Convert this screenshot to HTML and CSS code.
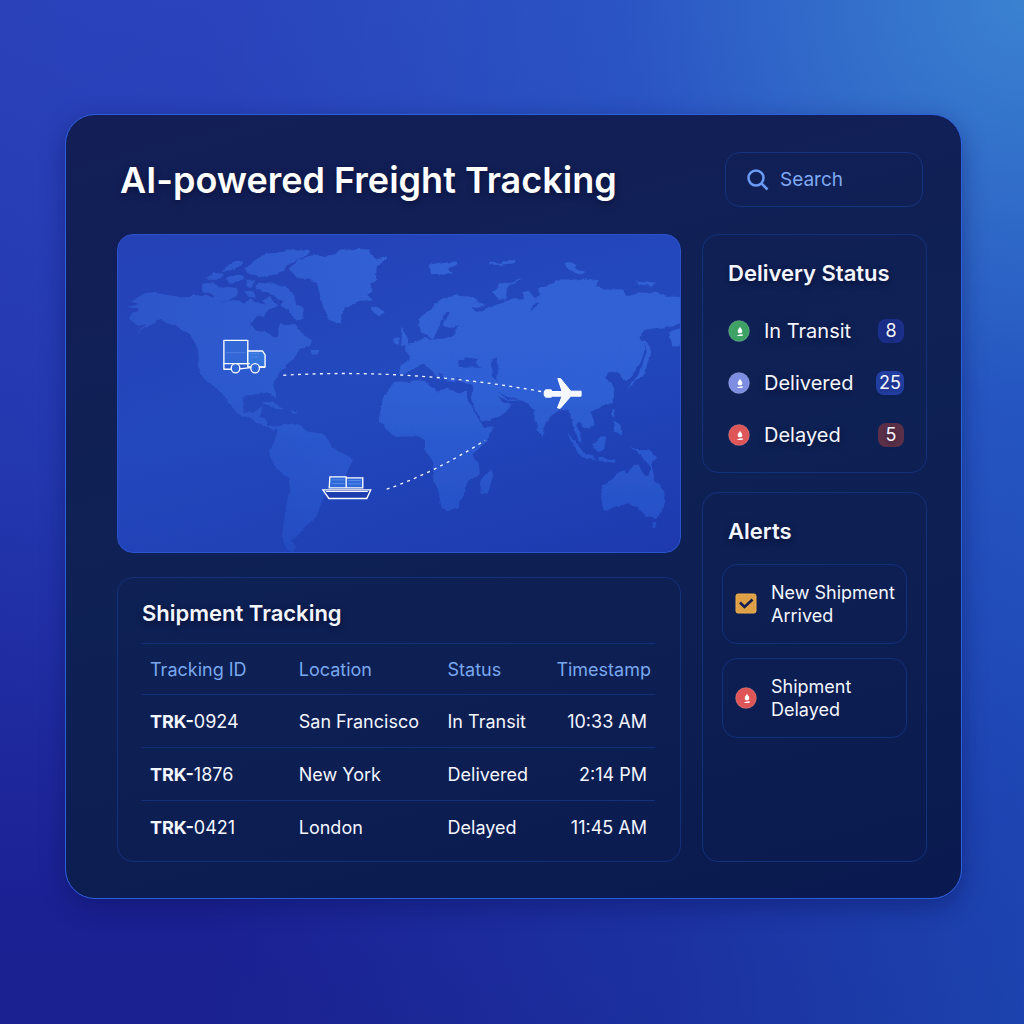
FILE: index.html
```html
<!DOCTYPE html>
<html lang="en">
<head>
<meta charset="utf-8">
<meta name="viewport" content="width=device-width, initial-scale=1">
<title>AI-powered Freight Tracking</title>
<link rel="stylesheet" href="styles.css">
</head>
<body>
<svg class="sprite" width="0" height="0" aria-hidden="true">
  <symbol id="dot-mark" viewBox="0 0 22 22">
    <circle cx="11" cy="11" r="10.5" fill="currentColor" stroke="#fff" stroke-opacity=".16"/>
    <path d="M12 6.800L13 8.500C14.600 9.500 14.800 12.400 13.200 13.300H10.800C9.200 12.400 9.400 9.500 11 8.500Z" fill="#fff"/>
    <path d="M9.300 15.200Q12 14.200 14.800 14.200L14.500 16H9.500Z" fill="#fff"/>
  </symbol>
</svg>
<main class="panel">
  <header class="header">
    <h1 class="title">AI-powered Freight Tracking</h1>
    <label class="search">
      <svg class="search-icon" viewBox="0 0 22 22" aria-hidden="true"><circle cx="9" cy="9" r="7.500"/><path d="M14.500 14.500L20.500 20.500"/></svg>
      <input class="search-input" type="search" placeholder="Search" aria-label="Search">
    </label>
  </header>
  <div class="content">
    <div class="column">
      <section class="map" aria-label="Shipment map">
        <svg class="map-svg" viewBox="21 18 1692 954" preserveAspectRatio="xMidYMid slice" aria-hidden="true">
          <defs>
            <linearGradient id="land" x1="0" y1="0" x2="0" y2="972" gradientUnits="userSpaceOnUse">
              <stop offset="0" stop-color="#3262d6"/><stop offset=".5" stop-color="#2f5fd4"/><stop offset="1" stop-color="#244dc4"/>
            </linearGradient>
            <linearGradient id="fade" x1="0" y1="0" x2="1" y2="0">
              <stop offset="0" stop-color="#2444b8" stop-opacity=".4"/><stop offset=".5" stop-color="#2444b8" stop-opacity="0"/>
            </linearGradient>
            <filter id="coast" x="0" y="0" width="1" height="1">
              <feTurbulence type="fractalNoise" baseFrequency=".035" numOctaves="3" seed="4"/>
              <feDisplacementMap in="SourceGraphic" scale="14" xChannelSelector="R" yChannelSelector="G"/>
            </filter>
          </defs>
          <g filter="url(#coast)">
            <rect x="0" y="0" width="1760" height="1000" fill="none"/>
            <g fill="url(#land)">
              <path d="M110 188L160 197 200 203 222 209 245 200 285 198 310 210 340 220 380 212 400 225 420 212 440 222 470 228 480 240 460 262 432 268 418 285 440 303 470 312 490 326 505 325 500 300 510 285 530 290 550 285 565 300 580 320 605 335 600 352 570 362 555 380 545 395 525 410 510 425 500 450 488 470 500 490 500 506 480 497 450 492 415 497 398 510 395 535 405 552 430 552 440 540 457 535 452 552 445 562 465 572 475 590 500 598 490 606 470 592 440 582 420 570 385 557 360 532 335 495 315 480 290 460 272 440 265 410 262 360 250 340 235 315 215 300 185 288 165 283 140 275 125 285 100 300 72 320 90 303 108 290 80 290 55 270 60 258 80 250 85 238 45 238 70 230 85 222 65 215 90 200Z"/>
              <path d="M485 595L500 610 497 635 475 671 485 700 500 725 540 750 535 800 525 850 515 920 530 960 545 975 555 960 545 940 565 920 580 900 600 881 625 851 640 806 700 756 725 701 720 686 680 666 655 646 640 616 600 611 570 591 550 588 535 583 510 592Z"/>
              <path d="M535 120L560 95 600 80 640 82 680 75 690 62 740 60 775 62 780 75 800 92 835 83 825 95 800 110 798 150 780 165 790 185 770 195 785 212 760 215 735 225 700 240 692 283 680 283 655 270 640 235 630 200 620 165 600 150 565 148Z"/>
              <path d="M405 118L430 92 480 70 540 64 600 66 590 80 560 92 530 110 520 125 490 135 470 148 440 140 420 135Z"/>
              <path d="M440 165L490 160 530 180 555 200 560 225 580 245 575 270 555 275 535 245 510 230 520 215 490 200 460 190 435 178Z"/>
              <path d="M275 165L310 160 330 178 365 172 385 185 375 205 345 220 315 212 300 195 275 185ZM285 150L310 132 335 130 340 140 315 150ZM330 125L370 100 395 98 388 112 355 125ZM345 150L380 138 400 140 395 155 360 162ZM405 150L430 155 425 175 405 170ZM400 185L430 188 440 205 415 208ZM455 215L480 205 500 235 480 240Z"/>
              <path d="M782 238L805 236 828 250 810 262 788 252ZM958 110L990 104 1040 98 1045 108 1010 118 1030 130 1000 138 965 132ZM875 290L885 315 895 335 892 350 870 352 872 330ZM855 325L867 328 862 348 850 345ZM600 363L625 365 622 378 605 378Z"/>
              <path d="M925 270L940 258 965 245 975 225 1000 208 1040 200 1090 205 1110 220 1125 232 1085 236 1100 250 1120 245 1140 235 1170 222 1200 214 1240 208 1238 190 1260 185 1275 205 1290 200 1285 180 1310 172 1345 155 1400 155 1430 148 1465 155 1460 175 1500 182 1540 182 1550 202 1575 198 1600 192 1640 192 1680 203 1740 205 1740 275 1680 295 1640 298 1605 305 1590 325 1605 340 1605 370 1595 400 1580 425 1560 445 1545 455 1535 440 1520 430 1500 435 1488 450 1510 460 1515 480 1510 521 1480 535 1455 545 1440 555 1453 575 1455 590 1440 600 1420 597 1410 580 1400 590 1415 620 1420 645 1405 630 1395 605 1390 570 1375 545 1350 540 1335 555 1310 580 1302 600 1300 625 1285 605 1275 570 1275 545 1255 525 1230 515 1200 518 1165 502 1180 520 1205 530 1195 545 1160 570 1115 580 1105 560 1085 515 1090 490 1085 470 1060 462 1040 448 1035 462 1010 455 985 430 995 458 965 425 940 405 915 415 900 430 880 437 870 432 875 410 900 390 890 375 885 360 890 345 910 343 925 335 945 325 960 330 1000 330 1030 320 1040 300 1050 290 1030 300 1000 290 1000 275 1022 255 1010 250 990 275 985 300 970 330 955 320 930 310 925 290Z"/>
              <path d="M855 460L840 480 825 500 815 531 805 571 830 606 850 626 915 624 945 636 945 661 970 701 968 746 985 786 995 841 1010 852 1045 836 1070 786 1075 756 1110 736 1105 700 1090 680 1130 636 1155 594 1120 596 1100 560 1075 515 1070 490 1050 492 1010 480 985 486 960 475 950 458 915 455 880 460Z"/>
              <path d="M1145 721L1152 736 1135 796 1115 798 1110 761Z"/>
              <path d="M1475 776L1510 752 1520 740 1545 725 1555 735 1570 715 1590 712 1600 735 1617 748 1625 706 1640 760 1665 790 1668 820 1660 850 1640 870 1610 862 1590 845 1560 825 1520 835 1490 848 1478 845 1480 820ZM1630 882L1645 882 1640 902 1630 898Z"/>
              <path d="M1562 656L1590 666 1620 664 1648 692 1625 700 1628 722 1612 706 1595 681ZM1372 612L1400 640 1430 678 1465 696 1430 692 1400 662ZM1450 651L1475 621 1490 626 1485 661 1465 671ZM1510 576L1535 591 1535 621 1515 606ZM1470 684L1520 696 1515 704 1470 694ZM1510 540L1518 545 1516 568 1508 560Z"/>
              <path d="M1602 330L1615 345 1625 378 1612 405 1604 440 1570 468 1552 486 1560 468 1590 440 1602 400 1610 375ZM1680 310L1740 296 1740 340 1690 355ZM1150 190L1170 165 1245 150 1200 165 1190 210 1165 210ZM1365 100L1385 100 1400 116 1430 130 1410 133 1370 115ZM1580 158L1640 165 1630 172 1588 166ZM1142 98L1175 102 1180 94 1218 94 1215 102 1170 108 1142 106Z"/>
              <path d="M453 525L490 523 522 543 495 541ZM540 545L570 552 550 557Z"/>
            </g>
            <g fill="#2449bf">
              <path d="M1045 400L1070 385 1105 392 1095 405 1118 418 1080 416 1048 418ZM1145 395L1160 390 1165 430 1162 460 1150 440ZM1262 250L1275 225 1290 218 1280 235ZM1165 488L1195 505 1230 515 1195 512Z"/>
            </g>
          </g>
          <rect x="0" y="0" width="1760" height="1000" fill="url(#fade)"/>
          <g fill="none" stroke="#f2f6ff" stroke-width="4">
            <path stroke-dasharray="9 13" d="M519 440Q910 418 1300 490"/>
            <path stroke-dasharray="9 13" d="M830 783Q970 735 1126 636"/>
          </g>
          <g stroke="#fff" stroke-width="4" fill="#2f66d8" stroke-linejoin="round">
            <path d="M340 335H412V405H340Z" fill="#3467d6"/>
            <path d="M412 367H456L464 379V415H412Z" fill="#3575de"/>
            <path d="M340 405V422H362M388 421L420 417M448 416H464M385 405H418" fill="none"/>
            <path d="M346 372H405M420 375H446M420 385H446" stroke="#5b8be8" stroke-width="2" fill="none"/>
            <ellipse cx="375" cy="419" rx="13" ry="14"/>
            <ellipse cx="434" cy="419" rx="13" ry="14"/>
          </g>
          <g stroke="#fff" stroke-width="4" stroke-linejoin="miter">
            <path d="M659 746H708V779H657ZM708 749H758V779H708Z" fill="#2f68d8"/>
            <path d="M666 755H703M666 766H703M714 757H752M714 767H752" stroke="#6fa0f0" stroke-width="2"/>
            <path d="M638 785H782L770 811H656Z" fill="#1d3cae"/>
            <path d="M647 790H773" stroke-width="3"/>
          </g>
          <path d="M1345 450L1353 450 1384 488H1415V503H1384L1352 540 1344 538 1358 503H1328L1325 506H1308L1304 500V490L1308 484H1325L1328 489H1358Z" fill="#f5f7ff" stroke="#fff" stroke-width="3" stroke-linejoin="round"/>
        </svg>
      </section>
      <section class="card shipments">
        <h2 class="card-title">Shipment Tracking</h2>
        <table class="table">
          <colgroup><col class="col-id"><col class="col-place"><col class="col-status"><col></colgroup>
          <thead><tr><th>Tracking ID</th><th>Location</th><th>Status</th><th class="time">Timestamp</th></tr></thead>
          <tbody>
            <tr><td><b>TRK-</b>0924</td><td>San Francisco</td><td>In Transit</td><td class="time">10:33 AM</td></tr>
            <tr><td><b>TRK-</b>1876</td><td>New York</td><td>Delivered</td><td class="time">2:14 PM</td></tr>
            <tr><td><b>TRK-</b>0421</td><td>London</td><td>Delayed</td><td class="time">11:45 AM</td></tr>
          </tbody>
        </table>
      </section>
    </div>
    <aside class="column side">
      <section class="card status">
        <h2 class="card-title">Delivery Status</h2>
        <ul class="status-list">
          <li class="status-row"><svg class="dot green" aria-hidden="true"><use href="#dot-mark"/></svg><span>In Transit</span><span class="badge">8</span></li>
          <li class="status-row"><svg class="dot violet" aria-hidden="true"><use href="#dot-mark"/></svg><span>Delivered</span><span class="badge bright">25</span></li>
          <li class="status-row"><svg class="dot red" aria-hidden="true"><use href="#dot-mark"/></svg><span>Delayed</span><span class="badge danger">5</span></li>
        </ul>
      </section>
      <section class="card alerts">
        <h2 class="card-title">Alerts</h2>
        <ul class="alert-list">
          <li class="alert"><svg class="dot" viewBox="0 0 22 22" aria-hidden="true"><rect x="1" y="1" width="20" height="19" rx="2" fill="#dda047" stroke="#efb04f"/><path d="M5 9.500L9.500 14 17.500 6.500" fill="none" stroke="#111c50" stroke-width="2.600"/></svg><span>New Shipment Arrived</span></li>
          <li class="alert"><svg class="dot red" aria-hidden="true"><use href="#dot-mark"/></svg><span>Shipment<br>Delayed</span></li>
        </ul>
      </section>
    </aside>
  </div>
</main>
</body>
</html>
```
FILE: styles.css
```css
* { box-sizing: border-box; }

body {
  margin: 0;
  min-height: 100vh;
  padding: 114px 62px 125px 65px;
  font-family: Inter, "Liberation Sans", sans-serif;
  color: #f4f6ff;
  background:
    radial-gradient(circle at 100% 0, rgba(66, 145, 216, .8), rgba(50, 110, 215, .4) 28%, rgba(45, 95, 210, .15) 55%, rgba(40, 90, 210, 0) 85%),
    linear-gradient(to right, rgba(26, 75, 180, 0) 20%, rgba(26, 75, 180, .3) 65%, rgba(26, 72, 178, .8)),
    linear-gradient(#2a3fb8, #2336ae 45%, #1b2092 90%, #1b2190);
}

h1, h2, ul { margin: 0; padding: 0; }
ul { list-style: none; }
.sprite { position: absolute; }

.panel {
  padding: 37px 34px 36px 51px;
  border: 1px solid #2c5fdc;
  border-radius: 30px;
  background: linear-gradient(165deg, #131e57, #0e2154 50%, #0a1a50);
  box-shadow: 0 8px 24px rgba(8, 14, 80, .4);
}

.header {
  display: flex;
  align-items: center;
  justify-content: space-between;
  margin-bottom: 27px;
  padding: 0 4px 0 3px;
}

.title {
  font-size: 36px;
  line-height: 44px;
  font-weight: 600;
  color: #fff;
  text-shadow: 0 2px 6px rgba(0, 0, 30, .5);
}

.search {
  display: flex;
  align-items: center;
  gap: 11px;
  width: 198px;
  height: 55px;
  padding: 0 21px;
  border: 1px solid #16347f;
  border-radius: 15px;
}

.search-icon {
  flex: none;
  width: 22px;
  height: 22px;
  fill: none;
  stroke: #6c9bf5;
  stroke-width: 2.5;
}

.search-input {
  width: 100%;
  min-width: 0;
  padding: 0;
  border: 0;
  outline: 0;
  background: none;
  font: 400 19px/24px Inter, "Liberation Sans", sans-serif;
  color: #7fadf7;
  appearance: none;
}
.search-input::placeholder { color: #7fa9f2; opacity: 1; }

.content {
  display: grid;
  grid-template-columns: minmax(0, 564fr) minmax(0, 225fr);
  gap: 21px;
}

.column {
  display: flex;
  flex-direction: column;
  gap: 24px;
}
.side { gap: 19px; }

.map {
  overflow: hidden;
  border: 1px solid #2b53cd;
  border-radius: 16px;
  background: linear-gradient(165deg, #2540b5, #2349bf 45%, #1d3aae);
}
.map-svg { display: block; width: 100%; aspect-ratio: 562 / 317; }

.card {
  border: 1px solid #13307b;
  border-radius: 16px;
}

.card-title {
  font-size: 22px;
  line-height: 28px;
  font-weight: 600;
  text-shadow: 0 2px 6px rgba(0, 0, 30, .6);
}

.shipments { padding: 21px 25px 7px 24px; }

.table {
  width: 100%;
  margin-top: 16px;
  table-layout: fixed;
  border-collapse: collapse;
  font-size: 18px;
  line-height: 24px;
}
.col-id { width: 29%; }
.col-place { width: 29%; }
.col-status { width: 19%; }

.table th,
.table td {
  height: 53px;
  padding: 2px 0 0 8px;
  border-top: 1px solid #13307b;
  font-weight: 400;
  text-align: left;
  white-space: nowrap;
}
.table th { height: 51px; color: #79a8ef; }
.table .time { padding-right: 8px; padding-left: 0; text-align: right; }
.table th.time { padding-right: 4px; }
.table b { font-weight: 700; }

.status { padding: 24px 22px 25px 25px; }
.status-list {
  display: grid;
  gap: 28px;
  margin-top: 32px;
}
.status-row {
  display: flex;
  align-items: center;
  gap: 14px;
  font-size: 20px;
  line-height: 24px;
  text-shadow: 0 2px 6px rgba(0, 0, 30, .5);
}

.dot { flex: none; width: 22px; height: 22px; }
.green { color: #3fa265; }
.violet { color: #7d8de2; }
.red { color: #df5658; }

.badge {
  min-width: 26px;
  height: 24px;
  margin-left: auto;
  padding: 0 3px;
  border-radius: 8px;
  background: #1b2f8b;
  font-size: 18px;
  text-align: center;
}
.bright { background: #2440a6; }
.danger { background: #5c3049; }

.alerts { flex: 1; padding: 24px 19px; }
.alerts .card-title { padding-left: 6px; }
.alert-list {
  display: grid;
  gap: 14px;
  margin-top: 19px;
}
.alert {
  display: flex;
  align-items: center;
  gap: 14px;
  min-height: 80px;
  padding: 8px 4px 8px 12px;
  border: 1px solid #13307b;
  border-radius: 15px;
  font-size: 18px;
  line-height: 23px;
}
```
